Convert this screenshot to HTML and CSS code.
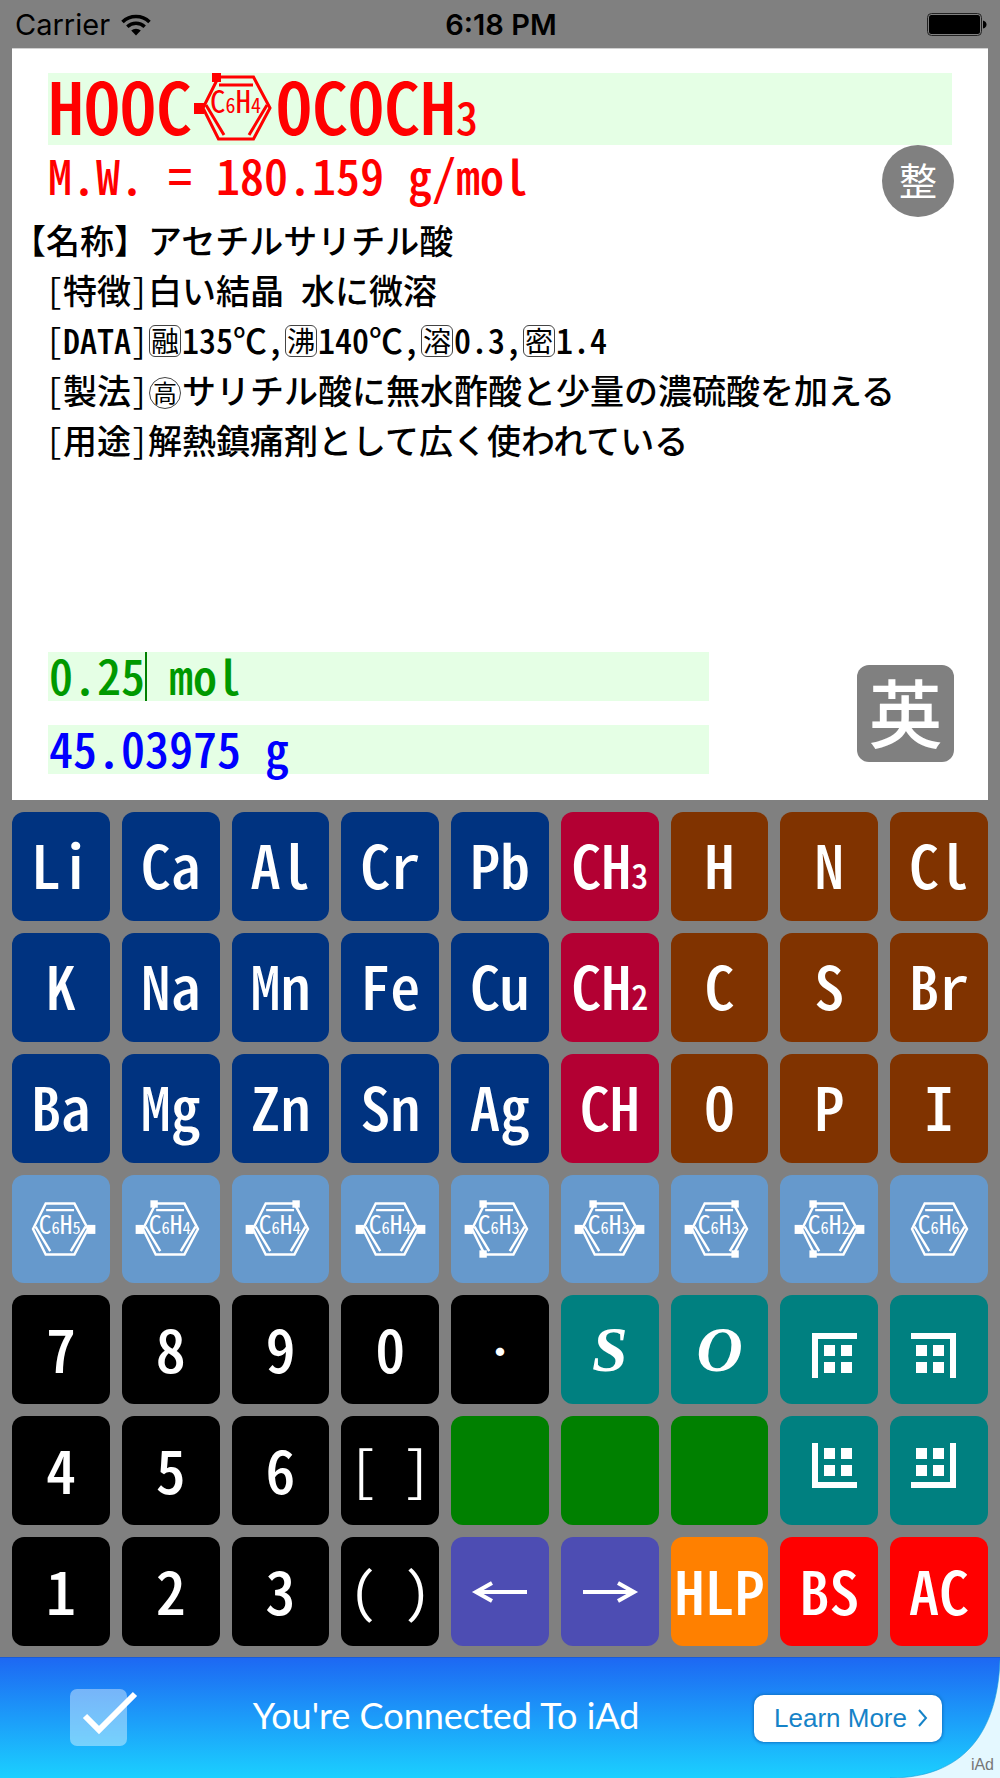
FILE: index.html
```html
<!DOCTYPE html>
<html lang="ja">
<head>
<meta charset="utf-8">
<meta name="viewport" content="width=device-width, initial-scale=1">
<title>分子量電卓</title>
<link rel="stylesheet" href="styles.css">
</head>
<body>
<svg class="defs" aria-hidden="true">
  <defs>
    <g id="ring" fill="none" stroke="currentColor" stroke-width="3">
      <path d="M11 35 26.500 4H61.500L78 35 61.500 66H26.500Z"/>
      <path d="M27 12H61M14 32 32 62M75 32 57 62"/>
    </g>
    <rect id="sub-l" x="2" y="30" width="10" height="11" fill="currentColor"/>
    <rect id="sub-r" x="77" y="30" width="10" height="11" fill="currentColor"/>
    <rect id="sub-tl" x="20" y="0" width="9" height="9" fill="currentColor"/>
    <rect id="sub-tr" x="59" y="0" width="9" height="9" fill="currentColor"/>
    <rect id="sub-bl" x="20" y="61" width="9" height="9" fill="currentColor"/>
    <rect id="sub-br" x="59" y="61" width="9" height="9" fill="currentColor"/>
    <g id="corner" fill="currentColor">
      <path d="M13 13H58V19H19V58H13Z"/>
      <path d="M25 25h11v11h-11zM42 25h11v11h-11zM25 42h11v11h-11zM42 42h11v11h-11z"/>
    </g>
  </defs>
</svg>

<header class="status">
  <div class="carrier">
    <span>Carrier</span>
    <svg class="wifi" viewBox="0 0 30 22" aria-hidden="true">
      <path d="M1.500 8A19.500 19.500 0 0 1 28.500 8" fill="none" stroke="#000" stroke-width="3.600"/>
      <path d="M6.300 12.800A12.500 12.500 0 0 1 23.700 12.800" fill="none" stroke="#000" stroke-width="3.400"/>
      <path d="M10.200 16.600A7 7 0 0 1 19.800 16.600L15 21.500Z"/>
    </svg>
  </div>
  <span class="time">6:18 PM</span>
  <svg class="battery" viewBox="0 0 60 24" aria-hidden="true">
    <rect x="0.500" y="0.500" width="54" height="22" rx="4" fill="none" stroke="#222"/>
    <rect x="2" y="2" width="51" height="19" rx="2.500"/>
    <path d="M56 7.500Q59.500 8.500 59.500 11.500T56 15.500Z"/>
  </svg>
</header>

<main class="panel">
  <div class="formula">
    <span>HOOC</span>
    <svg class="ring-large" viewBox="0 0 84 72" role="img" aria-label="C6H4">
      <use href="#ring"/><use href="#sub-l"/><use href="#sub-tl"/>
      <text class="ring-text" x="18" y="40">C<tspan class="ring-sub">6</tspan>H<tspan class="ring-sub">4</tspan></text>
    </svg>
    <span>OCOCH<span class="sub">3</span></span>
  </div>
  <div class="weight">
    <span>M.W. = 180.159 g/mol</span>
    <button class="round" type="button">整</button>
  </div>
  <div class="details">
    <p class="name">【名称】アセチルサリチル酸</p>
    <p><i>[</i>特徴<i>]</i>白い結晶 水に微溶</p>
    <p><i>[</i>DATA<i>]</i><span class="mark">融</span>135℃,<span class="mark">沸</span>140℃,<span class="mark">溶</span>0.3,<span class="mark">密</span>1.4</p>
    <p><i>[</i>製法<i>]</i><span class="mark circle">高</span>サリチル酸に無水酢酸と少量の濃硫酸を加える</p>
    <p><i>[</i>用途<i>]</i>解熱鎮痛剤として広く使われている</p>
  </div>
  <div class="amounts">
    <div class="fields">
      <div class="field mol"><input id="mol" type="text" value="0.25"><label for="mol">mol</label></div>
      <output class="field gram">45.03975 g</output>
    </div>
    <button class="lang" type="button">英</button>
  </div>
</main>

<section class="keypad">
  <button class="key metal" type="button">Li</button>
  <button class="key metal" type="button">Ca</button>
  <button class="key metal" type="button">Al</button>
  <button class="key metal" type="button">Cr</button>
  <button class="key metal" type="button">Pb</button>
  <button class="key group" type="button"><span>CH<span class="key-sub">3</span></span></button>
  <button class="key nonmetal" type="button">H</button>
  <button class="key nonmetal" type="button">N</button>
  <button class="key nonmetal" type="button">Cl</button>

  <button class="key metal" type="button">K</button>
  <button class="key metal" type="button">Na</button>
  <button class="key metal" type="button">Mn</button>
  <button class="key metal" type="button">Fe</button>
  <button class="key metal" type="button">Cu</button>
  <button class="key group" type="button"><span>CH<span class="key-sub">2</span></span></button>
  <button class="key nonmetal" type="button">C</button>
  <button class="key nonmetal" type="button">S</button>
  <button class="key nonmetal" type="button">Br</button>

  <button class="key metal" type="button">Ba</button>
  <button class="key metal" type="button">Mg</button>
  <button class="key metal" type="button">Zn</button>
  <button class="key metal" type="button">Sn</button>
  <button class="key metal" type="button">Ag</button>
  <button class="key group" type="button">CH</button>
  <button class="key nonmetal" type="button">O</button>
  <button class="key nonmetal" type="button">P</button>
  <button class="key nonmetal" type="button">I</button>

  <button class="key benzene" type="button"><svg viewBox="0 0 89 70"><use href="#ring"/><use href="#sub-r"/><text class="ring-text" x="18" y="41">C<tspan class="ring-sub">6</tspan>H<tspan class="ring-sub">5</tspan></text></svg></button>
  <button class="key benzene" type="button"><svg viewBox="0 0 89 70"><use href="#ring"/><use href="#sub-l"/><use href="#sub-tl"/><text class="ring-text" x="18" y="41">C<tspan class="ring-sub">6</tspan>H<tspan class="ring-sub">4</tspan></text></svg></button>
  <button class="key benzene" type="button"><svg viewBox="0 0 89 70"><use href="#ring"/><use href="#sub-l"/><use href="#sub-tr"/><text class="ring-text" x="18" y="41">C<tspan class="ring-sub">6</tspan>H<tspan class="ring-sub">4</tspan></text></svg></button>
  <button class="key benzene" type="button"><svg viewBox="0 0 89 70"><use href="#ring"/><use href="#sub-l"/><use href="#sub-r"/><text class="ring-text" x="18" y="41">C<tspan class="ring-sub">6</tspan>H<tspan class="ring-sub">4</tspan></text></svg></button>
  <button class="key benzene" type="button"><svg viewBox="0 0 89 70"><use href="#ring"/><use href="#sub-l"/><use href="#sub-tl"/><use href="#sub-bl"/><text class="ring-text" x="18" y="41">C<tspan class="ring-sub">6</tspan>H<tspan class="ring-sub">3</tspan></text></svg></button>
  <button class="key benzene" type="button"><svg viewBox="0 0 89 70"><use href="#ring"/><use href="#sub-l"/><use href="#sub-tl"/><use href="#sub-r"/><text class="ring-text" x="18" y="41">C<tspan class="ring-sub">6</tspan>H<tspan class="ring-sub">3</tspan></text></svg></button>
  <button class="key benzene" type="button"><svg viewBox="0 0 89 70"><use href="#ring"/><use href="#sub-l"/><use href="#sub-tr"/><use href="#sub-br"/><text class="ring-text" x="18" y="41">C<tspan class="ring-sub">6</tspan>H<tspan class="ring-sub">3</tspan></text></svg></button>
  <button class="key benzene" type="button"><svg viewBox="0 0 89 70"><use href="#ring"/><use href="#sub-l"/><use href="#sub-tl"/><use href="#sub-bl"/><use href="#sub-r"/><text class="ring-text" x="18" y="41">C<tspan class="ring-sub">6</tspan>H<tspan class="ring-sub">2</tspan></text></svg></button>
  <button class="key benzene" type="button"><svg viewBox="0 0 89 70"><use href="#ring"/><text class="ring-text" x="18" y="41">C<tspan class="ring-sub">6</tspan>H<tspan class="ring-sub">6</tspan></text></svg></button>

  <button class="key digit" type="button">7</button>
  <button class="key digit" type="button">8</button>
  <button class="key digit" type="button">9</button>
  <button class="key digit" type="button">0</button>
  <button class="key digit dot" type="button">・</button>
  <button class="key tool serif" type="button">S</button>
  <button class="key tool serif" type="button">O</button>
  <button class="key tool" type="button" aria-label="左上"><svg viewBox="0 0 60 60"><use href="#corner"/></svg></button>
  <button class="key tool" type="button" aria-label="右上"><svg viewBox="0 0 60 60"><use href="#corner" transform="matrix(-1 0 0 1 60 0)"/></svg></button>

  <button class="key digit" type="button">4</button>
  <button class="key digit" type="button">5</button>
  <button class="key digit" type="button">6</button>
  <button class="key digit bracket" type="button">[ ]</button>
  <button class="key blank" type="button" aria-label="1"></button>
  <button class="key blank" type="button" aria-label="2"></button>
  <button class="key blank" type="button" aria-label="3"></button>
  <button class="key tool" type="button" aria-label="左下"><svg viewBox="0 0 60 60"><use href="#corner" transform="matrix(1 0 0 -1 0 60)"/></svg></button>
  <button class="key tool" type="button" aria-label="右下"><svg viewBox="0 0 60 60"><use href="#corner" transform="matrix(-1 0 0 -1 60 60)"/></svg></button>

  <button class="key digit" type="button">1</button>
  <button class="key digit" type="button">2</button>
  <button class="key digit" type="button">3</button>
  <button class="key digit bracket" type="button">( )</button>
  <button class="key arrow" type="button" aria-label="左"><svg viewBox="0 0 60 60"><path d="M57 30H7M22 21 6 30 22 39" fill="none" stroke="currentColor" stroke-width="4"/></svg></button>
  <button class="key arrow" type="button" aria-label="右"><svg viewBox="0 0 60 60"><path d="M3 30H53M38 21 54 30 38 39" fill="none" stroke="currentColor" stroke-width="4"/></svg></button>
  <button class="key help" type="button">HLP</button>
  <button class="key erase" type="button">BS</button>
  <button class="key erase" type="button">AC</button>
</section>

<aside class="banner">
  <svg class="check" viewBox="0 0 68 58" aria-hidden="true">
    <rect x="0" y="0" width="57" height="57" rx="7" fill="#fff" fill-opacity=".4"/>
    <path d="M15 27 29 41 65 5" fill="none" stroke="#fff" stroke-width="6"/>
  </svg>
  <span class="banner-title">You're Connected To iAd</span>
  <a class="learn" href="#">Learn More
    <svg viewBox="0 0 10 18" aria-hidden="true"><path d="M1 1 8 9 1 17" fill="none" stroke="currentColor" stroke-width="2"/></svg>
  </a>
  <svg class="curl" viewBox="0 0 110 121" aria-hidden="true">
    <path d="M110 3C108 62 84 121 0 121H110Z" fill="#e4f8ff"/>
    <path d="M110 3C108 62 84 121 0 121" fill="none" stroke="#0d9ad8" stroke-opacity=".6"/>
  </svg>
  <span class="iad">iAd</span>
</aside>
</body>
</html>
```
FILE: styles.css
```css
* { box-sizing: border-box; }

body {
  margin: 0;
  min-height: 100vh;
  display: flex;
  flex-direction: column;
  background: #808080;
  font-family: "Noto Sans CJK JP", sans-serif;
  font-weight: 500;
  font-feature-settings: "hwid";
  text-spacing-trim: space-all;
}

button, input {
  font: inherit;
  font-feature-settings: inherit;
  color: inherit;
  border: 0;
  padding: 0;
}

.defs { display: none; }

/* status bar */
.status {
  height: 48px;
  padding: 2px 13px 0 15px;
  display: grid;
  grid-template-columns: 1fr auto 1fr;
  align-items: center;
  font: 400 29px/46px Inter, sans-serif;
  font-feature-settings: normal;
  color: #000;
}
.carrier { display: flex; align-items: center; gap: 11px; }
.wifi { width: 30px; height: 22px; }
.time { font-weight: 600; }
.battery { width: 60px; height: 24px; justify-self: end; }

/* result panel */
.panel {
  margin: 0 12px;
  padding: 24px 34px 26px 36px;
  background: #fff;
  border-top: 1px solid #d0d0d0;
}
.formula {
  display: flex;
  height: 72px;
  margin-right: 2px;
  padding-bottom: 10px;
  align-items: center;
  background: #e5ffe5;
  color: #f00;
  font-size: 72px;
  line-height: 62px;
}
.formula .sub { font-size: 44px; line-height: 0; }
.ring-large { width: 84px; height: 72px; margin-bottom: -10px; overflow: visible; }
.ring-text { font-size: 31px; font-weight: 400; fill: currentColor; }
.ring-sub { font-size: 20px; }
.weight {
  display: flex;
  justify-content: space-between;
  align-items: flex-start;
  height: 70px;
  color: #f00;
  font-size: 48px;
  line-height: 58px;
}
.round {
  flex: none;
  width: 72px;
  height: 72px;
  padding-bottom: 4px;
  border-radius: 50%;
  background: #808080;
  color: #fff;
  font-size: 38px;
  font-weight: 400;
  line-height: 40px;
}
.details {
  margin-left: -2px;
  font-size: 34px;
  line-height: 50px;
  color: #000;
}
.details p { margin: 0; white-space: nowrap; }
.details .name { margin-left: -34px; }
.details i { font-style: normal; font-weight: 400; }
.mark {
  display: inline-block;
  width: 32px;
  height: 32px;
  margin: 0 1px;
  border: 1px solid #444;
  border-radius: 6px;
  font-size: 28px;
  font-weight: 400;
  line-height: 28px;
  text-align: center;
  vertical-align: 2px;
}
.circle { border-radius: 50%; font-size: 24px; }

.amounts {
  margin-top: 187px;
  display: flex;
  justify-content: space-between;
  align-items: center;
}
.fields {
  width: 73%;
  display: grid;
  gap: 24px;
}
.field {
  display: flex;
  height: 49px;
  padding-left: 1px;
  background: #e5ffe5;
  font-size: 48px;
  line-height: 44px;
}
.mol { color: #009900; }
.mol input {
  width: 98px;
  height: 49px;
  padding-bottom: 5px;
  border-right: 2px solid #008000;
  background: none;
  line-height: 44px;
}
.mol label { margin-left: 22px; }
.gram { color: #00f; }
.lang {
  width: 97px;
  height: 97px;
  padding-bottom: 6px;
  border-radius: 12px;
  background: #808080;
  color: #fff;
  font-size: 74px;
  line-height: 80px;
}

/* keypad */
.keypad {
  flex: 1;
  padding: 12px 12px 11px;
  display: grid;
  grid-template-columns: repeat(9, minmax(0, 1fr));
  grid-template-rows: repeat(7, minmax(100px, 1fr));
  gap: 12px;
}
.key {
  display: flex;
  align-items: center;
  justify-content: center;
  min-width: 0;
  border-radius: 12px;
  padding-bottom: 6px;
  color: #fff;
  font-size: 60px;
  line-height: 60px;
  white-space: pre;
}
.key-sub { font-size: 34px; line-height: 0; }
.metal { background: #003380; }
.group { background: #b30033; }
.nonmetal { background: #803300; }
.benzene { background: #6699cc; padding: 0; }
.benzene svg { width: 73px; height: 58px; }
.digit { background: #000; }
.dot { font-size: 36px; padding: 0; }
.bracket { font-size: 54px; font-weight: 400; }
.tool { background: #008080; padding: 0; }
.serif { font: italic 700 64px "Liberation Serif", serif; }
.blank { background: #008000; }
.arrow { background: #4d4db3; padding: 0; }
.tool svg, .arrow svg { width: 60px; height: 60px; }
.help { background: #ff8000; }
.erase { background: #f00; }

/* advertisement */
.banner {
  position: relative;
  height: 121px;
  padding: 0 58px 0 70px;
  display: flex;
  align-items: center;
  justify-content: space-between;
  border-top: 1px solid #1a5cd8;
  background: linear-gradient(#1d68f3, #1bd0ff);
  color: #fff;
  font-feature-settings: normal;
}
.check { width: 68px; height: 58px; }
.banner-title { padding-bottom: 6px; font: 400 36px/48px Lato, sans-serif; }
.learn {
  display: flex;
  align-items: center;
  gap: 11px;
  height: 47px;
  padding: 0 14px 0 20px;
  border-radius: 10px;
  background: #fff;
  box-shadow: 0 0 3px 1px #1074c8;
  color: #1583c8;
  font: 400 26px "Liberation Sans", sans-serif;
  text-decoration: none;
}
.learn svg { width: 10px; height: 18px; }
.curl { position: absolute; right: 0; bottom: 0; width: 110px; height: 121px; }
.iad {
  position: absolute;
  right: 6px;
  bottom: 3px;
  color: #777;
  font: 400 16px/20px "Liberation Sans", sans-serif;
}
```
